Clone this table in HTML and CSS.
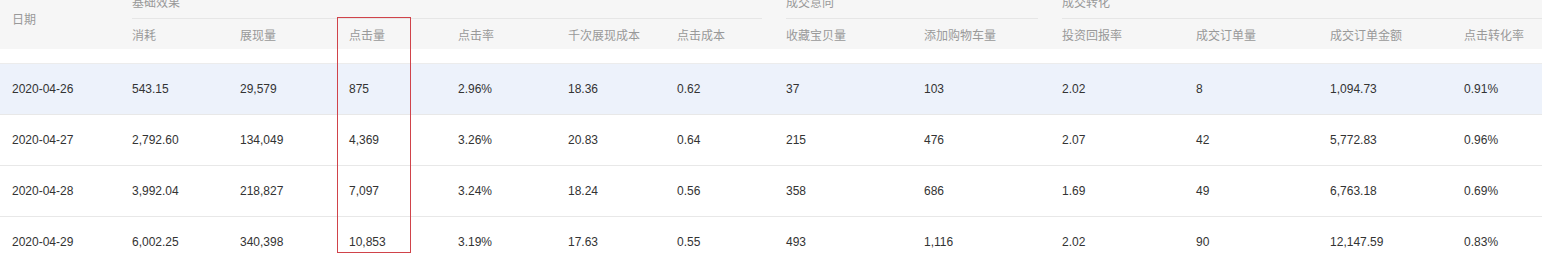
FILE: index.html
```html
<!DOCTYPE html>
<html lang="zh-CN">
<head>
  <meta charset="UTF-8">
  <title>推广数据报表</title>
  <link rel="stylesheet" href="styles.css">
</head>
<body>
  <div class="report">
    <table class="data-table">
      <colgroup>
        <col style="width:120px"><col style="width:108px"><col style="width:109px">
        <col style="width:109px"><col style="width:110px"><col style="width:109px">
        <col style="width:109px"><col style="width:138px"><col style="width:138px">
        <col style="width:134px"><col style="width:134px"><col style="width:134px">
        <col style="width:110px">
      </colgroup>
      <thead>
        <tr class="group-row">
          <th rowspan="2" class="date-head">日期</th>
          <th colspan="6"><div class="group-title">基础效果</div></th>
          <th colspan="2"><div class="group-title">成交意向</div></th>
          <th colspan="4"><div class="group-title">成交转化</div></th>
        </tr>
        <tr class="sub-row">
          <th>消耗</th>
          <th>展现量</th>
          <th>点击量</th>
          <th>点击率</th>
          <th>千次展现成本</th>
          <th>点击成本</th>
          <th>收藏宝贝量</th>
          <th>添加购物车量</th>
          <th>投资回报率</th>
          <th>成交订单量</th>
          <th>成交订单金额</th>
          <th>点击转化率</th>
        </tr>
        <tr class="spacer-row"><td colspan="13"></td></tr>
      </thead>
      <tbody>
        <tr class="active">
          <td>2020-04-26</td><td>543.15</td><td>29,579</td><td>875</td><td>2.96%</td><td>18.36</td><td>0.62</td>
          <td>37</td><td>103</td><td>2.02</td><td>8</td><td>1,094.73</td><td>0.91%</td>
        </tr>
        <tr>
          <td>2020-04-27</td><td>2,792.60</td><td>134,049</td><td>4,369</td><td>3.26%</td><td>20.83</td><td>0.64</td>
          <td>215</td><td>476</td><td>2.07</td><td>42</td><td>5,772.83</td><td>0.96%</td>
        </tr>
        <tr>
          <td>2020-04-28</td><td>3,992.04</td><td>218,827</td><td>7,097</td><td>3.24%</td><td>18.24</td><td>0.56</td>
          <td>358</td><td>686</td><td>1.69</td><td>49</td><td>6,763.18</td><td>0.69%</td>
        </tr>
        <tr>
          <td>2020-04-29</td><td>6,002.25</td><td>340,398</td><td>10,853</td><td>3.19%</td><td>17.63</td><td>0.55</td>
          <td>493</td><td>1,116</td><td>2.02</td><td>90</td><td>12,147.59</td><td>0.83%</td>
        </tr>
      </tbody>
    </table>
    <div class="mark-box"></div>
  </div>
</body>
</html>
```
FILE: styles.css
```css
body {
  margin: 0;
  font-family: "Liberation Sans", "Noto Sans CJK SC", Arial, sans-serif;
  font-size: 12px;
  background: #fff;
}

.report {
  position: relative;
  width: 1542px;
  height: 255px;
  overflow: hidden;
}

.data-table {
  margin-top: -12px;
  width: 1562px;
  table-layout: fixed;
  border-collapse: collapse;
}

.data-table th {
  padding: 0 12px;
  text-align: left;
  font-weight: normal;
  color: #999;
  background: #f6f6f6;
  white-space: nowrap;
}

.group-row th {
  height: 31px;
}

.group-title {
  height: 30px;
  line-height: 30px;
  border-bottom: 1px solid #e6e6e6;
}

.sub-row th {
  height: 30px;
}

.spacer-row td {
  height: 14px;
  padding: 0;
  border-bottom: 1px solid #ececec;
}

.data-table tbody td {
  height: 50px;
  padding: 0 12px;
  color: #333;
  border-bottom: 1px solid #e8e8e8;
  white-space: nowrap;
}

.data-table tbody tr.active td {
  background: #edf2fb;
}

.mark-box {
  position: absolute;
  left: 337px;
  top: 17px;
  width: 72px;
  height: 234px;
  border: 1px solid #d0434a;
}
```
